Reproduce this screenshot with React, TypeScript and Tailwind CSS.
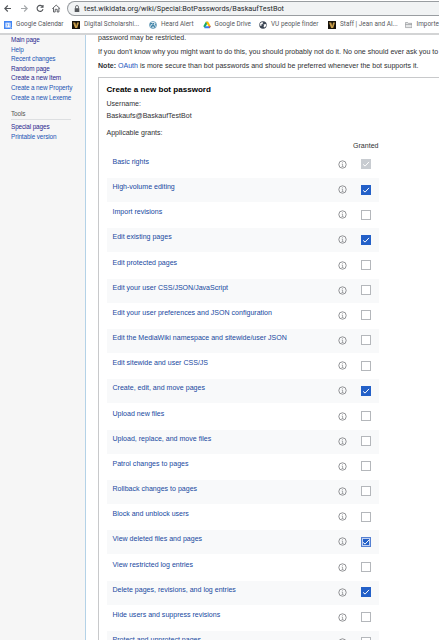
import React from "react";

type State = "disabled" | "on" | "off" | "focus";

const grants: [string, State][] = [
  ["Basic rights", "disabled"],
  ["High-volume editing", "on"],
  ["Import revisions", "off"],
  ["Edit existing pages", "on"],
  ["Edit protected pages", "off"],
  ["Edit your user CSS/JSON/JavaScript", "off"],
  ["Edit your user preferences and JSON configuration", "off"],
  ["Edit the MediaWiki namespace and sitewide/user JSON", "off"],
  ["Edit sitewide and user CSS/JS", "off"],
  ["Create, edit, and move pages", "on"],
  ["Upload new files", "off"],
  ["Upload, replace, and move files", "off"],
  ["Patrol changes to pages", "off"],
  ["Rollback changes to pages", "off"],
  ["Block and unblock users", "off"],
  ["View deleted files and pages", "focus"],
  ["View restricted log entries", "off"],
  ["Delete pages, revisions, and log entries", "on"],
  ["Hide users and suppress revisions", "off"],
  ["Protect and unprotect pages", "off"],
];

const boxStyle: Record<State, string> = {
  disabled: "bg-[#c8ccd1]",
  on: "bg-[#2360c8]",
  off: "border border-[#b4b7bb] bg-white",
  focus: "border border-[#5580d2] bg-[#2360c8] shadow-[inset_0_0_0_1px_#c3d2f2]",
};

function Check({ state }: { state: State }) {
  return (
    <span className={`flex size-[10px] shrink-0 items-center justify-center ${boxStyle[state]}`}>
      {state !== "off" && (
        <svg viewBox="0 0 10 10" className="size-[10px] shrink-0" fill="none" stroke="white" strokeWidth="1">
          <path d="M2.1 5.4 4.1 7.1 8 2.9" />
        </svg>
      )}
    </span>
  );
}

function Info() {
  return (
    <svg viewBox="0 0 9 9" className="size-[9px] shrink-0" fill="none" stroke="#77797c" strokeWidth="0.8">
      <circle cx="4.5" cy="4.5" r="3.7" />
      <path d="M3.7 4h.9v2.5M3.6 6.5h1.9M4.2 2.6h.8" strokeWidth="0.6" />
    </svg>
  );
}

function Globe() {
  return (
    <svg viewBox="0 0 8 8" className="size-2">
      <circle cx="4" cy="4" r="3.7" fill="#3c4654" />
      <path d="M1 2.5 3 1l1.2.8-.9 1.4-1.2.2.6 1L1.4 5ZM4.5 3.6 6.8 3l.4 1.7-1.4 1.7-1.3-.6.5-1.1Z" fill="#fff" />
    </svg>
  );
}

function VLogo() {
  return (
    <svg viewBox="0 0 8 8" className="size-2">
      <path d="M0 0h8v8H0z" fill="#17130c" />
      <path d="M1 1.4h2.3L4.2 5l.8-3.6h2L5.2 6.9H3.1Z" fill="#c69c49" />
    </svg>
  );
}

function Toolbar() {
  return (
    <div className="flex h-[17px] items-start bg-white">
      <svg viewBox="0 0 66 17" className="h-[17px] w-[66px] shrink-0" fill="none" stroke="#53565a" strokeWidth="1.1">
        <path d="M11 8.5H5M7.8 5.5l-3 3 3 3" />
        <path d="M21 8.5h6M24.2 5.5l3 3-3 3" stroke="#a4a7aa" />
        <path d="M42.6 6.7a3 3 0 1 0 .4 2.5M43 5v2.3h-2.4" />
        <path d="m52.3 8.7 3.9-3.6 3.9 3.6M53.5 8v4h1.7V9.3h2V12h1.7V8" strokeWidth="0.9" />
      </svg>
      <div className="mt-px ml-px flex h-[15px] w-[372px] items-center rounded-l-full border border-r-0 border-[#999da1] bg-[#f1f3f4] pl-1.5">
        <svg viewBox="0 0 6 8" className="h-2 w-1.5 shrink-0">
          <path d="M1.5 3.5V2a1.3 1.3 0 0 1 3 0v1.5" fill="none" stroke="#55585c" strokeWidth="0.8" />
          <path d="M.7 3.2h4.6V7H.7z" fill="#55585c" />
        </svg>
        <span className="ml-1 font-[Roboto,sans-serif] text-[7.3px] leading-3 whitespace-nowrap text-[#27292c]">
          test.wikidata.org/wiki/Special:BotPasswords/BaskaufTestBot
        </span>
      </div>
    </div>
  );
}

function Bookmark({ icon, label, width }: { icon: React.ReactNode; label: string; width: string }) {
  return (
    <div className={`flex shrink-0 items-center gap-1 ${width}`}>
      {icon}
      <span className="whitespace-nowrap">{label}</span>
    </div>
  );
}

function Bookmarks() {
  return (
    <div className="flex h-[18px] items-center overflow-hidden border-b-2 border-[#d3d4d5] bg-white pl-1 font-[Roboto,sans-serif] text-[6.4px] tracking-[0.03px] text-[#56595d]">
      <Bookmark
        width="w-[68px]"
        label="Google Calendar"
        icon={
          <svg viewBox="0 0 8 8" className="size-2">
            <path d="M0 0h8v8H0z" fill="#4285f4" />
            <path d="M1.5 1.7h5v4.8h-5z" fill="#fff" />
            <path d="M2.2 2.8h1.3v1H2.7h.8V5.2H2.2M4.6 3l.8-.4v2.8" stroke="#4285f4" strokeWidth=".5" fill="none" />
            <path d="M6.5 6.5H8L6.5 8Z" fill="#d7e4f8" />
          </svg>
        }
      />
      <Bookmark width="w-[77px]" label="Digital Scholarshi..." icon={<VLogo />} />
      <Bookmark
        width="w-[53.5px]"
        label="Heard Alert"
        icon={
          <svg viewBox="0 0 8 8" className="size-2">
            <circle cx="4" cy="4" r="3.5" fill="#f4f9fb" stroke="#397ea4" strokeWidth=".7" />
            <path d="m1.4 2.5 1.4 4L4 3.2l1.3 3.3 1.3-3.8M1.3 2.5h1.8M3.4 2.5h1.8" stroke="#28739c" strokeWidth=".9" fill="none" />
          </svg>
        }
      />
      <Bookmark
        width="w-[56.5px]"
        label="Google Drive"
        icon={
          <svg viewBox="0 0 8 8" className="size-2">
            <path d="M2.8.8h2.4L2 7 .3 5.3Z" fill="#18a866" />
            <path d="M2.8.8h2.4l2.6 4.5H5.3Z" fill="#fbbc04" />
            <path d="M2.2 5.3h5.6L6.5 7.3H1.3Z" fill="#367ef1" />
            <path d="M5.5 5.3h2.3L6.6 7.3Z" fill="#e5483c" />
          </svg>
        }
      />
      <Bookmark width="w-[69px]" label="VU people finder" icon={<Globe />} />
      <Bookmark width="w-[77px]" label="Staff | Jean and Al..." icon={<VLogo />} />
      <Bookmark
        width="w-[34px]"
        label="Importe"
        icon={
          <svg viewBox="0 0 8 8" className="size-2">
            <path d="M.5 1.3h2.4l.8.9h3.8v4.6h-7ZM.5 3.4h7" fill="#e5e6e7" stroke="#818487" strokeWidth=".6" />
          </svg>
        }
      />
    </div>
  );
}

const links: [string, boolean][] = [
  ["Main page", true],
  ["Help", false],
  ["Recent changes", false],
  ["Random page", true],
  ["Create a new Item", true],
  ["Create a new Property", false],
  ["Create a new Lexeme", false],
];

function Sidebar() {
  return (
    <aside className="w-[86px] shrink-0 border-r border-[#b4d2e7] bg-[#f6f6f6] pl-[11px] text-[6.4px] tracking-[-0.13px]">
      <nav className="flex flex-col">
        {links.map(([label, visited]) => (
          <a key={label} className={`h-[9.6px] leading-[10px] whitespace-nowrap ${visited ? "text-[#29278f]" : "text-[#2255b5]"}`}>
            {label}
          </a>
        ))}
      </nav>
      <h3 className="mt-[7.3px] mr-3.5 h-[11px] border-b border-[#dddfe1] leading-[10px] text-[#555]">Tools</h3>
      <nav className="mt-[1.5px] flex flex-col">
        <a className="h-[9.6px] leading-[10px] text-[#29278f]">Special pages</a>
        <a className="h-[9.6px] leading-[10px] text-[#2255b5]">Printable version</a>
      </nav>
    </aside>
  );
}

export default function App() {
  return (
    <div className="flex h-[640px] w-[439px] flex-col overflow-hidden bg-white font-['Liberation_Sans',Arial,sans-serif]">
      <Toolbar />
      <Bookmarks />
      <div className="flex min-h-0 flex-1">
        <Sidebar />
        <main className="min-w-0 flex-1 overflow-hidden pl-3 text-[7.06px] text-[#303134]">
          <div className="-mt-[2px] h-[41px] whitespace-nowrap">
            <p className="h-[13.5px] leading-[10px]">password may be restricted.</p>
            <p className="h-[14.5px] leading-[10px]">If you don't know why you might want to do this, you should probably not do it. No one should ever ask you to</p>
            <p className="leading-[10px]">
              <b>Note:</b> <a className="text-[#1c55bd]">OAuth</a> is more secure than bot passwords and should be preferred whenever the bot supports it.
            </p>
          </div>
          <section className="mt-[3px] h-[700px] border-t border-l border-[#c8c9cb] pl-[7.5px] whitespace-nowrap">
            <h2 className="mt-1.5 h-[15px] text-[8.07px] leading-3 font-bold text-black">Create a new bot password</h2>
            <p className="h-3 leading-[10px]">Username:</p>
            <p className="h-[16.5px] leading-[10px]">Baskaufs@BaskaufTestBot</p>
            <p className="h-[13.5px] leading-[10px]">Applicable grants:</p>
            <div className="flex w-[272px] justify-end leading-[10px]">Granted</div>
            <div className="mt-[2px] flex flex-col">
              {grants.map(([label, state], i) => (
                <div key={label} className="h-[25.16px] w-[272px]">
                  <div className={`flex h-6 items-start pl-1.5 ${i % 2 ? "bg-[#f8f9fa]" : ""}`}>
                    <a className="mt-1 flex-1 leading-[10px] text-[#1748a0]">{label}</a>
                    <span className="mt-[7px] mr-[14px]"><Info /></span>
                    <span className="mt-[6.4px] mr-2"><Check state={state} /></span>
                  </div>
                </div>
              ))}
            </div>
          </section>
        </main>
      </div>
    </div>
  );
}
